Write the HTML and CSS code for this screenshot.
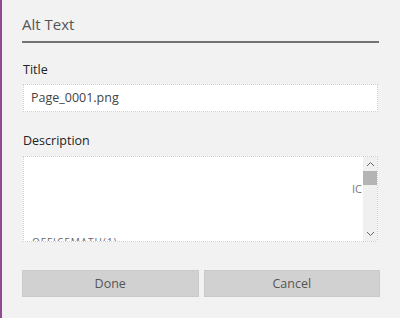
FILE: index.html
```html
<!DOCTYPE html>
<html lang="en">
<head>
  <meta charset="UTF-8">
  <title>Alt Text</title>
  <link rel="stylesheet" href="styles.css">
</head>
<body>

<div id="pane">
  <h1 class="pane-title">Alt Text</h1>

  <label class="field-label">Title</label>
  <div class="input">Page_0001.png</div>

  <label class="field-label desc-label">Description</label>
  <div class="textarea">
    <div class="ta-body">
      <span class="ic">IC</span>
      <span class="clip">OFFICEMATH(1)</span>
    </div>
    <div class="scroll">
      <span class="arr up">
        <svg width="9" height="6" viewBox="0 0 9 6"><path d="M1 5 L4.5 1.5 L8 5" fill="none" stroke="#666" stroke-width="1"/></svg>
      </span>
      <span class="thumb"></span>
      <span class="track"></span>
      <span class="arr down">
        <svg width="9" height="6" viewBox="0 0 9 6"><path d="M1 1 L4.5 4.5 L8 1" fill="none" stroke="#666" stroke-width="1"/></svg>
      </span>
    </div>
  </div>

  <div class="buttons">
    <a href="#" class="btn">Done</a>
    <a href="#" class="btn">Cancel</a>
  </div>
</div>

</body>
</html>
```

FILE: styles.css
```css
* {
  margin: 0;
  padding: 0;
  box-sizing: border-box;
}

body {
  width: 400px;
  height: 318px;
  background-color: #f2f2f2;
  font-family: "Open Sans", "Noto Sans", sans-serif;
  color: #333;
  overflow: hidden;
}

#pane {
  height: 318px;
  border-left: 2px solid #914a94;
  padding: 13px 22px 0 21px;
}

/*标题和下面的粗线*/
.pane-title {
  font-size: 15px;
  font-weight: 400;
  color: #555;
  line-height: 22px;
  padding-bottom: 6px;
  margin-left: -1px;
  margin-right: -1px;
  border-bottom: 2px solid #737373;
}

.field-label {
  display: block;
  font-size: 12.5px;
  color: #222;
  line-height: 18px;
  margin-top: 18px;
}

.desc-label {
  margin-top: 20px;
}

.input {
  margin-top: 5px;
  height: 28px;
  background-color: #fff;
  border: 1px dotted #cfcfcf;
  font-size: 12.5px;
  color: #444;
  line-height: 26px;
  padding-left: 7px;
}

.textarea {
  margin-top: 6px;
  height: 86px;
  background-color: #fff;
  border: 1px dotted #cfcfcf;
  display: flex;
}

.ta-body {
  flex: 1;
  position: relative;
  overflow: hidden;
}

.ic {
  position: absolute;
  right: 1px;
  top: 24px;
  font-size: 11px;
  color: #777;
}

.clip {
  position: absolute;
  left: 8px;
  top: 78px;
  font-size: 10px;
  letter-spacing: 1px;
  color: #666;
}

/*滚动条*/
.scroll {
  width: 14px;
  display: flex;
  flex-direction: column;
  background-color: #f0f0f0;
}

.arr {
  height: 14px;
  display: flex;
  align-items: center;
  justify-content: center;
}

.thumb {
  height: 14px;
  background-color: #b4b4b4;
}

.track {
  flex: 1;
}

.buttons {
  display: flex;
  gap: 5px;
  margin-top: 28px;
  margin-left: -1px;
  margin-right: -2px;
}

.btn {
  flex: 1;
  height: 27px;
  background-color: #d1d1d1;
  border: 1px dotted #c4c4c4;
  text-decoration: none;
  color: #555;
  font-size: 12.5px;
  text-align: center;
  line-height: 25px;
}
```
